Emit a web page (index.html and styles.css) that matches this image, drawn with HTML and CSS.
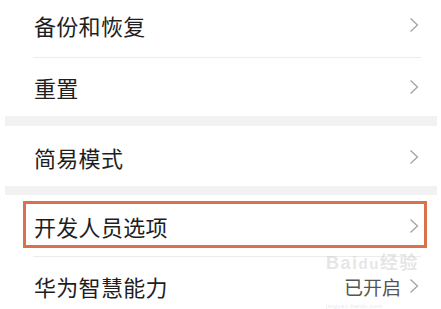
FILE: index.html
```html
<!DOCTYPE html>
<html lang="zh-CN">
<head>
<meta charset="utf-8">
<link rel="stylesheet" href="styles.css">
</head>
<body>
<div class="page">
  <div class="row r1">
    <span class="label">备份和恢复</span>
    <svg class="chev" viewBox="0 0 10 16"><path d="M1.5 1.5 L8.5 8 L1.5 14.5"/></svg>
  </div>
  <div class="divider"></div>
  <div class="row r2">
    <span class="label">重置</span>
    <svg class="chev" viewBox="0 0 10 16"><path d="M1.5 1.5 L8.5 8 L1.5 14.5"/></svg>
  </div>
  <div class="band"></div>
  <div class="row r3">
    <span class="label">简易模式</span>
    <svg class="chev" viewBox="0 0 10 16"><path d="M1.5 1.5 L8.5 8 L1.5 14.5"/></svg>
  </div>
  <div class="band b2"></div>
  <div class="row r4">
    <span class="label">开发人员选项</span>
    <svg class="chev" viewBox="0 0 10 16"><path d="M1.5 1.5 L8.5 8 L1.5 14.5"/></svg>
    <div class="highlight"></div>
  </div>
  <div class="divider"></div>
  <div class="row r5">
    <span class="label">华为智慧能力</span>
    <span class="value">已开启</span>
    <svg class="chev" viewBox="0 0 10 16"><path d="M1.5 1.5 L8.5 8 L1.5 14.5"/></svg>
    <div class="watermark"><span class="wm-main">Bai<span class="wm-du">du</span>经验</span><span class="wm-sub">jingyan.baidu.com</span></div>
  </div>
</div>
</body>
</html>
```
FILE: styles.css
```css
html, body {
  margin: 0;
  padding: 0;
  background: #ffffff;
}
.page {
  width: 441px;
  height: 309px;
  overflow: hidden;
  font-family: "Noto Sans CJK SC", "Noto Sans", sans-serif;
  color: #1e1e1e;
}
.row {
  position: relative;
  display: flex;
  align-items: center;
  padding: 0 22px 0 34px;
  box-sizing: border-box;
}
.r1 { height: 57px; padding-bottom: 8px; }
.r2 { height: 58px; }
.r3 { height: 60px; padding-top: 2px; }
.r4 { height: 61px; padding-top: 1px; }
.r5 { height: 60px; padding-bottom: 2px; }
.label {
  flex: 1;
  font-size: 22px;
  line-height: 1;
  letter-spacing: 0.3px;
}
.value {
  font-size: 19px;
  line-height: 1;
  color: #555555;
  margin-right: 8px;
}
.chev {
  width: 10px;
  height: 16px;
  fill: none;
  stroke: #a3a3a3;
  stroke-width: 1.3;
}
.divider {
  height: 1px;
  margin: 0 20px 0 33px;
  background: #ececec;
}
.band {
  height: 10px;
  margin: 0 4px 0 5px;
  background: #f2f2f2;
}
.band.b2 { height: 9px; }
.highlight {
  position: absolute;
  left: 23px;
  top: 6px;
  width: 404px;
  height: 47px;
  box-sizing: border-box;
  border: 3px solid #d9714a;
  pointer-events: none;
}
.watermark {
  position: absolute;
  left: 326px;
  top: -3px;
  width: 100px;
  height: 55px;
  color: rgba(205, 205, 205, 0.5);
  font-family: "Liberation Sans", "Noto Sans CJK SC", sans-serif;
  pointer-events: none;
}
.wm-main {
  position: absolute;
  left: 0;
  top: 0;
  font-size: 18px;
  font-weight: bold;
  line-height: 18px;
  letter-spacing: 1.5px;
  white-space: nowrap;
}
.wm-du {
  font-size: 15px;
}
.wm-sub {
  position: absolute;
  left: 0;
  bottom: 0;
  font-size: 6px;
  line-height: 6px;
  letter-spacing: 0.5px;
  white-space: nowrap;
}
```
